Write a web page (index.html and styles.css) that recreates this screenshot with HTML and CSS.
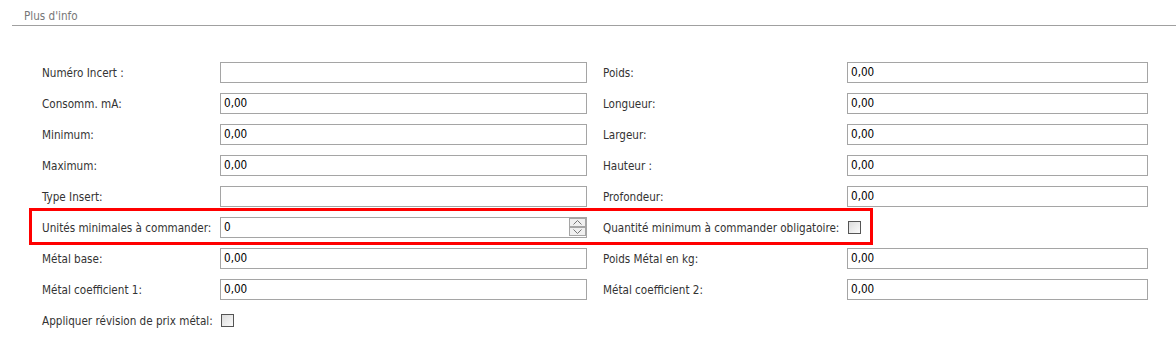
FILE: index.html
```html
<!DOCTYPE html>
<html lang="fr">
<head>
  <meta charset="UTF-8">
  <link rel="stylesheet" href="styles.css">
</head>
<body>

<!-- Bloc plus d'info -->
<div class="section-title">Plus d'info</div>

<div class="form">
  <div class="row">
    <label>Numéro Incert :</label>
    <div class="field"></div>
    <label>Poids:</label>
    <div class="field">0,00</div>
  </div>
  <div class="row">
    <label>Consomm. mA:</label>
    <div class="field">0,00</div>
    <label>Longueur:</label>
    <div class="field">0,00</div>
  </div>
  <div class="row">
    <label>Minimum:</label>
    <div class="field">0,00</div>
    <label>Largeur:</label>
    <div class="field">0,00</div>
  </div>
  <div class="row">
    <label>Maximum:</label>
    <div class="field">0,00</div>
    <label>Hauteur :</label>
    <div class="field">0,00</div>
  </div>
  <div class="row">
    <label>Type Insert:</label>
    <div class="field"></div>
    <label>Profondeur:</label>
    <div class="field">0,00</div>
  </div>
  <div class="row highlight">
    <label>Unités minimales à commander:</label>
    <div class="field num">
      <span>0</span>
      <span class="spinner">
        <span class="spin-btn">
          <svg width="9" height="5" viewBox="0 0 9 5"><path d="M0.5 4.5 L4.5 0.5 L8.5 4.5" fill="none" stroke="#777" stroke-width="1"/></svg>
        </span>
        <span class="spin-btn">
          <svg width="9" height="5" viewBox="0 0 9 5"><path d="M0.5 0.5 L4.5 4.5 L8.5 0.5" fill="none" stroke="#777" stroke-width="1"/></svg>
        </span>
      </span>
    </div>
    <label>Quantité minimum à commander obligatoire:</label>
    <div class="check-cell"><span class="check"></span></div>
  </div>
  <div class="row">
    <label>Métal base:</label>
    <div class="field">0,00</div>
    <label>Poids Métal en kg:</label>
    <div class="field">0,00</div>
  </div>
  <div class="row">
    <label>Métal coefficient 1:</label>
    <div class="field">0,00</div>
    <label>Métal coefficient 2:</label>
    <div class="field">0,00</div>
  </div>
  <div class="row">
    <label>Appliquer révision de prix métal:</label>
    <div class="check-cell"><span class="check"></span></div>
  </div>
</div>

</body>
</html>
```

FILE: styles.css
```css
body {
  margin: 0;
  background: #fff;
  font-family: "DejaVu Sans Condensed", "DejaVu Sans", sans-serif;
  font-size: 11.6px;
  color: #333;
}

.section-title {
  margin-left: 12px;
  padding: 8px 0 1px 12px;
  line-height: 16px;
  color: #777;
  border-bottom: 1px solid #a0a0a0;
}

.form {
  margin: 36px 0 0 42px;
  display: flex;
  flex-direction: column;
  gap: 10px;
}

.row {
  position: relative;
  display: grid;
  grid-template-columns: 178px 367px 16px 244px 301px;
  height: 21px;
  align-items: center;
  white-space: nowrap;
}

.row label:nth-of-type(2) {
  grid-column: 4;
}

.field {
  box-sizing: border-box;
  height: 21px;
  border: 1px solid #a5a5a5;
  padding: 0 3px;
  line-height: 19px;
  color: #000;
}

.num {
  display: flex;
  justify-content: space-between;
  padding-right: 0;
}

.spinner {
  display: flex;
  flex-direction: column;
  width: 17px;
  margin: 0 0 0 auto;
}

.spin-btn {
  box-sizing: border-box;
  height: 9px;
  border: 1px solid #a5a5a5;
  background: #f0f0f0;
  display: flex;
  align-items: center;
  justify-content: center;
}

.check-cell {
  display: flex;
  align-items: center;
  padding-left: 1px;
}

.check {
  box-sizing: border-box;
  width: 13px;
  height: 13px;
  border: 1px solid #555;
  background: linear-gradient(135deg, #dcdcdc, #fbfbfb);
}

.highlight::after {
  content: "";
  position: absolute;
  left: -13px;
  top: -9px;
  width: 844px;
  height: 37px;
  box-sizing: border-box;
  border: 3px solid #f00;
}
```
